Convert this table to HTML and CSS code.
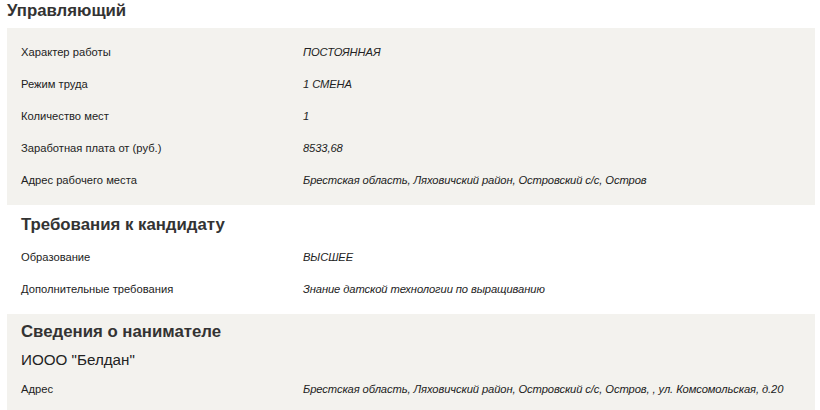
FILE: index.html
```html
<!DOCTYPE html>
<html lang="ru">

<head>
  <meta charset="UTF-8" />
  <meta name="viewport" content="width=device-width, initial-scale=1.0" />
  <title>Вакансия</title>
  <link rel="stylesheet" href="styles.css">
</head>

<body>
  <div id="vacancy">
    <h1 class="vacancy-title">Управляющий</h1>

    <div class="section section-gray first">
      <div class="row">
        <span class="label">Характер работы</span>
        <span class="value">ПОСТОЯННАЯ</span>
      </div>
      <div class="row">
        <span class="label">Режим труда</span>
        <span class="value">1 СМЕНА</span>
      </div>
      <div class="row">
        <span class="label">Количество мест</span>
        <span class="value">1</span>
      </div>
      <div class="row">
        <span class="label">Заработная плата от (руб.)</span>
        <span class="value">8533,68</span>
      </div>
      <div class="row">
        <span class="label">Адрес рабочего места</span>
        <span class="value">Брестская область, Ляховичский район, Островский с/с, Остров</span>
      </div>
    </div>

    <div class="section requirements">
      <h2>Требования к кандидату</h2>
      <div class="row">
        <span class="label">Образование</span>
        <span class="value">ВЫСШЕЕ</span>
      </div>
      <div class="row">
        <span class="label">Дополнительные требования</span>
        <span class="value">Знание датской технологии по выращиванию</span>
      </div>
    </div>

    <div class="section section-gray employer">
      <h2>Сведения о нанимателе</h2>
      <p class="company">ИООО "Белдан"</p>
      <div class="row">
        <span class="label">Адрес</span>
        <span class="value">Брестская область, Ляховичский район, Островский с/с, Остров, , ул. Комсомольская, д.20</span>
      </div>
    </div>
  </div>
</body>

</html>
```

FILE: styles.css
```css
body {
  margin: 0;
  padding: 0;
  font-family: "Liberation Sans", Arial, sans-serif;
  color: #222;
  background: #fff;
}

#vacancy {
  padding: 0 5px 0 7px;
}

h1,
h2 {
  margin: 0;
  font-size: 16.8px;
  line-height: 22px;
  font-weight: bold;
  color: #333;
}

.vacancy-title {
  margin-bottom: 6px;
}

.section {
  padding: 0 14px;
}

.section-gray {
  background-color: #f3f2ee;
}

.first {
  padding-top: 8px;
  padding-bottom: 9px;
}

.requirements {
  padding-top: 9px;
  padding-bottom: 9px;
}

.requirements h2 {
  margin-bottom: 5px;
}

.employer {
  padding-top: 7px;
  padding-bottom: 10px;
}

.row {
  display: flex;
  height: 32px;
  line-height: 32px;
  font-size: 11.2px;
}

.label {
  width: 282px;
  flex-shrink: 0;
}

.value {
  font-style: italic;
  white-space: nowrap;
  letter-spacing: -0.1px;
}

.company {
  margin: 7px 0 3px;
  font-size: 15.2px;
  line-height: 20px;
  color: #222;
}
```
